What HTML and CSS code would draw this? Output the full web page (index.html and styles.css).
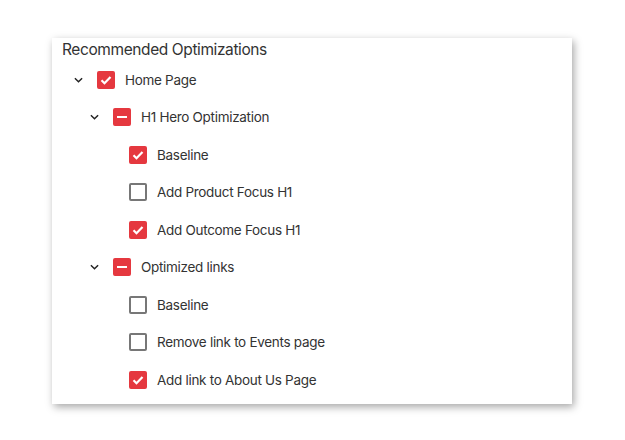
FILE: index.html
```html
<!DOCTYPE html>
<html lang="en">
<head>
  <meta charset="UTF-8" />
  <meta name="viewport" content="width=device-width, initial-scale=1.0" />
  <title>Recommended Optimizations</title>
  <link rel="stylesheet" href="styles.css">
</head>
<body>
  <div class="panel">
    <div class="panel-title">Recommended Optimizations</div>
    <ul class="tree">
      <li class="node lvl-0">
        <span class="toggle"><svg viewBox="0 0 10 6"><path d="M1 1l4 4 4-4" /></svg></span>
        <span class="box checked"><svg viewBox="0 0 18 18"><path d="M4.5 9.2l3 3 6-6.2" /></svg></span>
        <span class="label">Home Page</span>
      </li>
      <li class="node lvl-1">
        <span class="toggle"><svg viewBox="0 0 10 6"><path d="M1 1l4 4 4-4" /></svg></span>
        <span class="box mixed"><i></i></span>
        <span class="label">H1 Hero Optimization</span>
      </li>
      <li class="node lvl-2">
        <span class="toggle"></span>
        <span class="box checked"><svg viewBox="0 0 18 18"><path d="M4.5 9.2l3 3 6-6.2" /></svg></span>
        <span class="label">Baseline</span>
      </li>
      <li class="node lvl-2">
        <span class="toggle"></span>
        <span class="box"></span>
        <span class="label">Add Product Focus H1</span>
      </li>
      <li class="node lvl-2">
        <span class="toggle"></span>
        <span class="box checked"><svg viewBox="0 0 18 18"><path d="M4.5 9.2l3 3 6-6.2" /></svg></span>
        <span class="label">Add Outcome Focus H1</span>
      </li>
      <li class="node lvl-1">
        <span class="toggle"><svg viewBox="0 0 10 6"><path d="M1 1l4 4 4-4" /></svg></span>
        <span class="box mixed"><i></i></span>
        <span class="label">Optimized links</span>
      </li>
      <li class="node lvl-2">
        <span class="toggle"></span>
        <span class="box"></span>
        <span class="label">Baseline</span>
      </li>
      <li class="node lvl-2">
        <span class="toggle"></span>
        <span class="box"></span>
        <span class="label">Remove link to Events page</span>
      </li>
      <li class="node lvl-2">
        <span class="toggle"></span>
        <span class="box checked"><svg viewBox="0 0 18 18"><path d="M4.5 9.2l3 3 6-6.2" /></svg></span>
        <span class="label">Add link to About Us Page</span>
      </li>
    </ul>
  </div>
</body>
</html>
```

FILE: styles.css
```css
* { margin: 0; padding: 0; box-sizing: border-box; }
html, body { min-height: 100%; }
body {
  font-family: 'Inter', 'Liberation Sans', sans-serif;
  background: #ffffff;
  color: #333333;
  min-height: 100vh;
  padding: 38px 0 0 52px;
}
.panel {
  width: 520px;
  height: 366px;
  background: #fff;
  box-shadow: 2px 3px 8px rgba(0,0,0,0.35);
  padding: 0 10px 4px;
}
.panel-title {
  font-size: 15.5px;
  letter-spacing: -0.4px;
  line-height: 23px;
  color: #333;
}
.tree {
  list-style: none;
}
.node {
  display: flex;
  align-items: center;
  height: 37.5px;
  padding-left: 4px;
}
.lvl-1 { padding-left: 20px; }
.lvl-2 { padding-left: 36px; }
.toggle {
  width: 24px;
  display: flex;
  justify-content: center;
  margin-right: 7px;
}
.toggle svg {
  width: 9px;
  height: 6px;
  fill: none;
  stroke: #222;
  stroke-width: 1.6;
}
.box {
  width: 18px;
  height: 18px;
  border: 2px solid #777;
  border-radius: 2px;
  background: #fff;
  display: flex;
  align-items: center;
  justify-content: center;
  margin-right: 10px;
  flex-shrink: 0;
}
.box.checked, .box.mixed {
  background: #e5383f;
  border-color: #e5383f;
}
.box svg {
  width: 18px;
  height: 18px;
  flex-shrink: 0;
  fill: none;
  stroke: #fff;
  stroke-width: 2.2;
}
.box i {
  width: 10px;
  height: 2px;
  background: #fff;
}
.label {
  font-size: 13.5px;
  letter-spacing: -0.3px;
  color: #333;
}
```
